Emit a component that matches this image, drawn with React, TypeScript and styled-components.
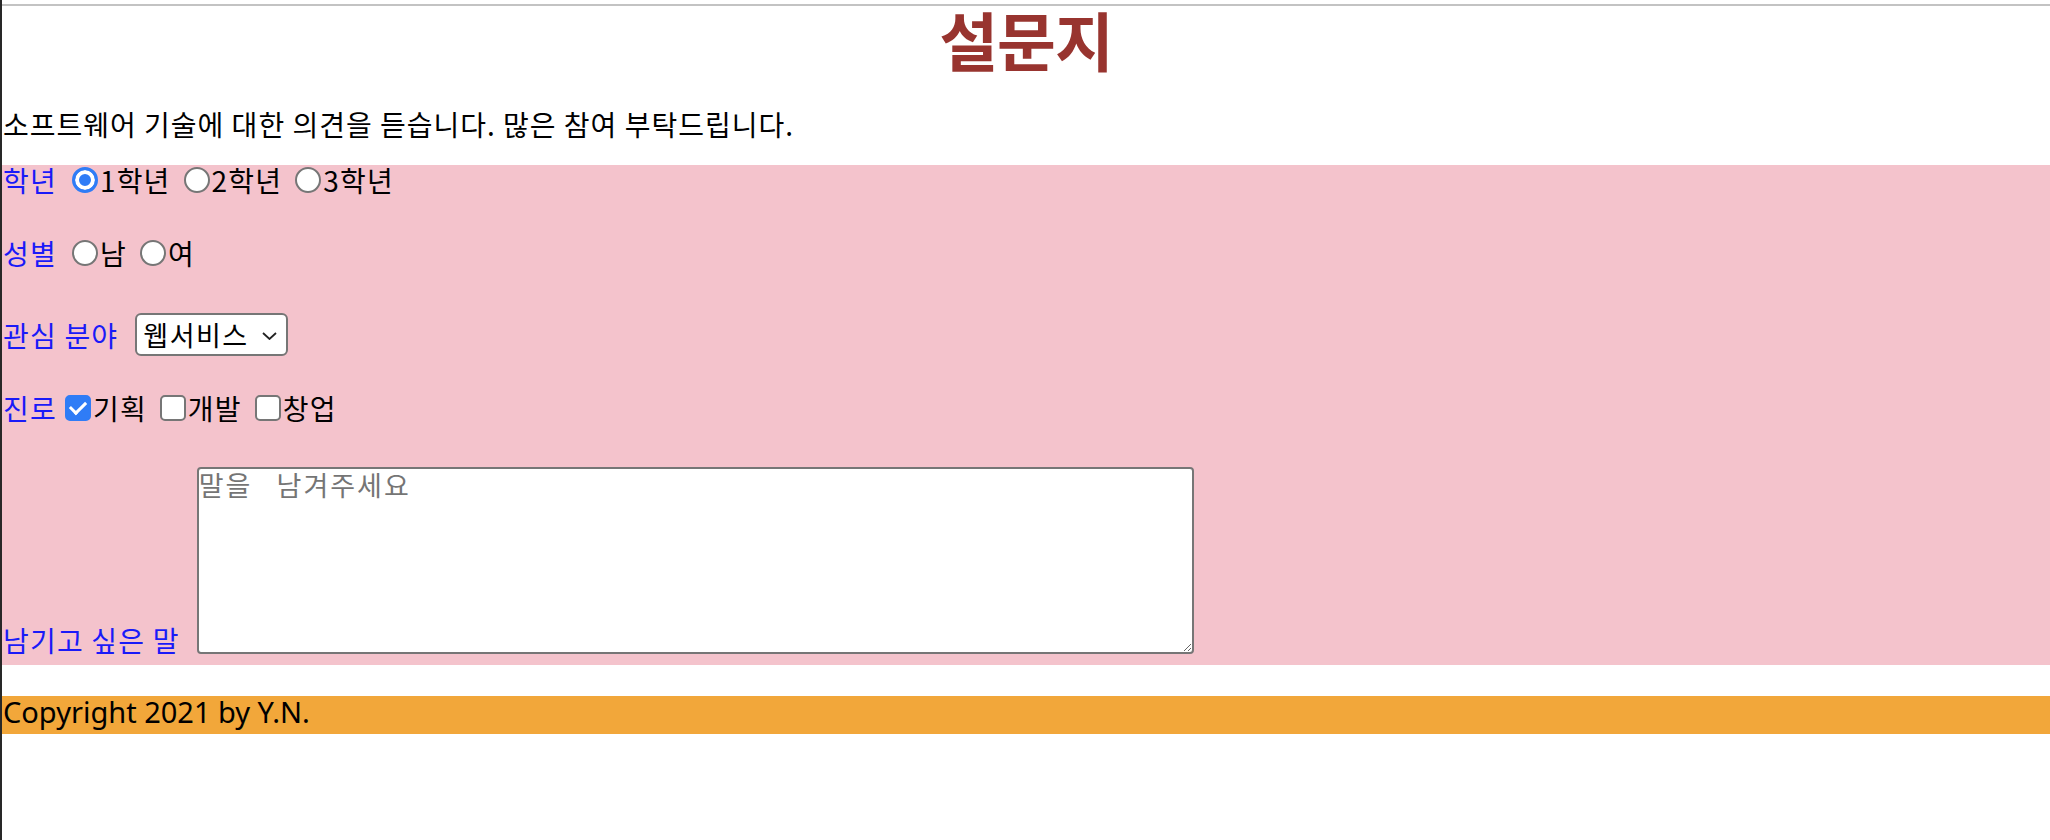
import styled, { createGlobalStyle } from "styled-components";

const GlobalStyle = createGlobalStyle`
  html, body {
    margin: 0;
    padding: 0;
    background: #fff;
  }
  * {
    box-sizing: border-box;
  }
`;

const App = () => {
  return (
    <>
      <GlobalStyle />
      <Page>
        <TopLine />
        <Title>설문지</Title>
        <Intro>소프트웨어 기술에 대한 의견을 듣습니다. 많은 참여 부탁드립니다.</Intro>
        <Form>
          <Row $height={30}>
            <Label>학년</Label>
            <Radio name="grade" defaultChecked $first />
            <Option>1학년</Option>
            <Radio name="grade" />
            <Option>2학년</Option>
            <Radio name="grade" />
            <Option>3학년</Option>
          </Row>
          <Row $height={30} $top={43}>
            <Label>성별</Label>
            <Radio name="gender" $first />
            <Option>남</Option>
            <Radio name="gender" />
            <Option>여</Option>
          </Row>
          <Row $height={43} $top={45}>
            <Label>관심 분야</Label>
            <SelectWrap>
              <Select defaultValue="web">
                <option value="web">웹서비스</option>
                <option value="app">앱</option>
                <option value="game">게임</option>
              </Select>
              <Chevron width="15" height="8" viewBox="0 0 15 8">
                <path d="M1 1 L7.5 7 L14 1" fill="none" stroke="#222" strokeWidth="1.8" />
              </Chevron>
            </SelectWrap>
          </Row>
          <Row $height={31} $top={36}>
            <Label>진로</Label>
            <CheckBox defaultChecked $first />
            <Option>기획</Option>
            <CheckBox />
            <Option>개발</Option>
            <CheckBox />
            <Option>창업</Option>
          </Row>
          <MessageRow>
            <Label>남기고 싶은 말</Label>
            <TextArea placeholder="말을   남겨주세요" />
          </MessageRow>
        </Form>
        <Footer>Copyright 2021 by Y.N.</Footer>
      </Page>
    </>
  );
};

export default App;

const Page = styled.div`
  min-height: 100vh;
  border-left: 2px solid #282828;
  padding-top: 4px;
  font-family: "Noto Sans CJK KR", "Noto Sans", sans-serif;
`;
const TopLine = styled.div`
  height: 2px;
  background: #c3c3c3;
`;
const Title = styled.h1`
  margin: -3px 0 0;
  font-size: 64px;
  line-height: 70px;
  font-weight: 700;
  letter-spacing: -1px;
  text-align: center;
  color: #98342f;
`;
const Intro = styled.p`
  margin: 31px 0 0;
  padding-left: 1px;
  font-size: 28px;
  line-height: 40px;
  letter-spacing: 1px;
  color: #000;
`;
const Form = styled.form`
  margin-top: 21px;
  background: #f4c3cc;
  padding-bottom: 11px;
  display: flex;
  flex-direction: column;
`;
const Row = styled.div<{ $height: number; $top?: number }>`
  display: flex;
  align-items: center;
  height: ${(p) => p.$height}px;
  margin-top: ${(p) => p.$top || 0}px;
  padding-left: 1px;
  font-size: 28px;
  letter-spacing: 1.2px;
  line-height: 1;
`;
const MessageRow = styled.div`
  display: flex;
  align-items: flex-end;
  margin-top: 44px;
  padding-left: 1px;
  font-size: 28px;
  letter-spacing: 1.2px;
  line-height: 1;
`;
const Label = styled.span`
  color: #1a1af8;
  white-space: pre;
`;
const Option = styled.span`
  color: #000;
  white-space: pre;
`;
const Radio = styled.input.attrs({ type: "radio" })<{ $first?: boolean }>`
  appearance: none;
  flex: none;
  width: 26px;
  height: 26px;
  margin: 0 2px 0 ${(p) => (p.$first ? 15 : 13)}px;
  border: 2px solid #767676;
  border-radius: 50%;
  background: #fff;
  &:checked {
    border: 3px solid #2f7cf6;
    background: #2f7cf6;
    box-shadow: inset 0 0 0 4px #fff;
  }
`;
const CheckBox = styled.input.attrs({ type: "checkbox" })<{ $first?: boolean }>`
  appearance: none;
  flex: none;
  width: 26px;
  height: 26px;
  margin: 0 2px 0 ${(p) => (p.$first ? 8 : 13)}px;
  border: 2px solid #767676;
  border-radius: 5px;
  background: #fff;
  display: grid;
  place-content: center;
  &:checked {
    background: #2f7cf6;
    border-color: #2f7cf6;
  }
  &:checked::before {
    content: "";
    width: 13px;
    height: 7px;
    border-left: 3px solid #fff;
    border-bottom: 3px solid #fff;
    transform: translate(0, -2px) rotate(-45deg);
  }
`;
const SelectWrap = styled.span`
  position: relative;
  display: inline-flex;
  margin-left: 17px;
`;
const Select = styled.select`
  appearance: none;
  width: 153px;
  height: 43px;
  padding: 0 0 0 6px;
  border: 2px solid #767676;
  border-radius: 6px;
  background: #fff;
  color: #000;
  font-family: "Noto Sans CJK KR", sans-serif;
  font-size: 27px;
  letter-spacing: 1.5px;
`;
const Chevron = styled.svg`
  position: absolute;
  right: 11px;
  top: 19px;
  pointer-events: none;
`;
const TextArea = styled.textarea`
  width: 997px;
  height: 187px;
  margin-left: 17px;
  padding: 0;
  border: 2px solid #767676;
  border-radius: 4px;
  background: #fff;
  font-family: "Noto Sans CJK KR", sans-serif;
  font-size: 27px;
  letter-spacing: 2px;
  line-height: 1.2;
  &::placeholder {
    color: #757575;
  }
`;
const Footer = styled.footer`
  margin-top: 31px;
  height: 38px;
  padding-left: 1px;
  background: #f2a73a;
  font-family: "Noto Sans", sans-serif;
  font-size: 29px;
  line-height: 32px;
  color: #000;
`;
